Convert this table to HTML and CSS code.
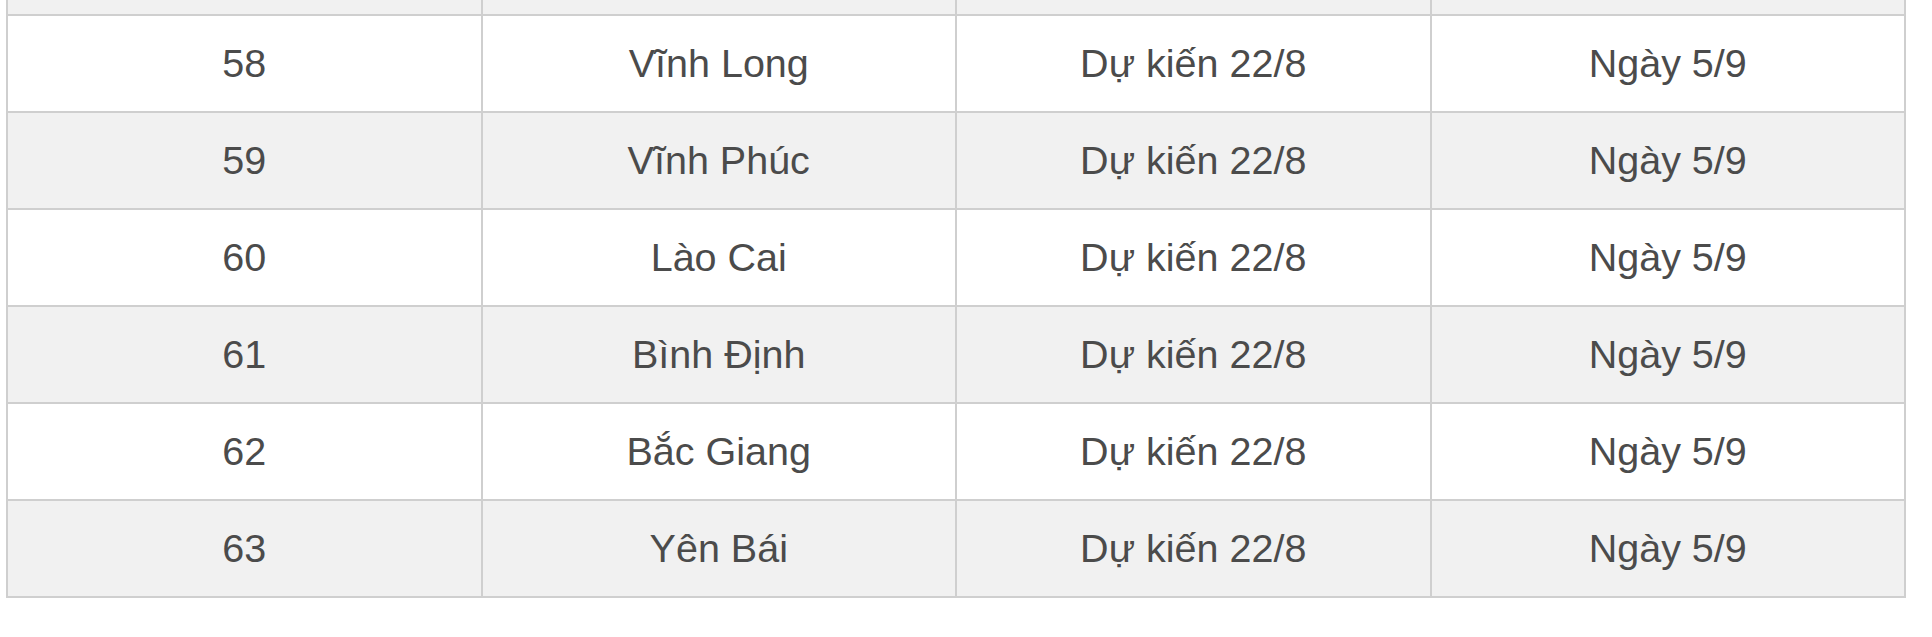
FILE: index.html
```html
<!DOCTYPE html>
<html lang="vi">
<head>
<meta charset="utf-8">
<title>Lịch</title>
<link rel="stylesheet" href="styles.css">
</head>
<body>
<div class="wrap">
<table class="sched">
<tbody>
<tr class="stub"><td></td><td></td><td></td><td></td></tr>
<tr><td>58</td><td>Vĩnh Long</td><td>Dự kiến 22/8</td><td>Ngày 5/9</td></tr>
<tr class="alt"><td>59</td><td>Vĩnh Phúc</td><td>Dự kiến 22/8</td><td>Ngày 5/9</td></tr>
<tr><td>60</td><td>Lào Cai</td><td>Dự kiến 22/8</td><td>Ngày 5/9</td></tr>
<tr class="alt"><td>61</td><td>Bình Định</td><td>Dự kiến 22/8</td><td>Ngày 5/9</td></tr>
<tr><td>62</td><td>Bắc Giang</td><td>Dự kiến 22/8</td><td>Ngày 5/9</td></tr>
<tr class="alt"><td>63</td><td>Yên Bái</td><td>Dự kiến 22/8</td><td>Ngày 5/9</td></tr>
</tbody>
</table>
</div>
</body>
</html>
```
FILE: styles.css
```css
html, body {
  margin: 0;
  padding: 0;
  background: #ffffff;
}
.wrap {
  padding: 0 0 0 6px;
  width: 1900px;
}
.sched {
  border-collapse: collapse;
  width: 1900px;
  table-layout: fixed;
  font-family: "Liberation Sans", Arial, sans-serif;
  font-size: 39.5px;
  color: #4b4b4b;
}
.sched td {
  border: 2px solid #cfcfcf;
  text-align: center;
  vertical-align: middle;
  height: 95px;
  padding: 0;
  background: #ffffff;
}
.sched tr.alt td,
.sched tr.stub td {
  background: #f1f1f1;
}
.sched tr.stub td {
  height: 14px;
  border-top: none;
}
```
